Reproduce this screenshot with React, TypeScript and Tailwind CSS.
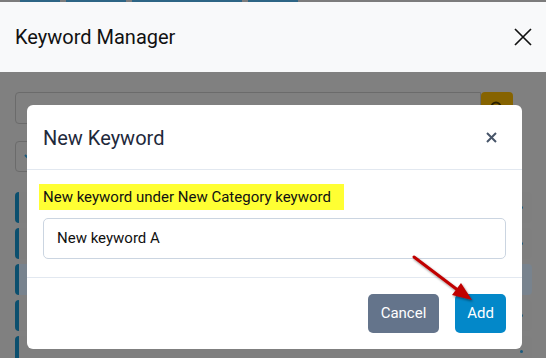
import React from 'react';

const rows = [
  { top: false, dot: true },
  { top: false, dot: true },
  { top: true, dot: false },
  { top: false, dot: true },
  { top: false, dot: true },
];

const App: React.FC = () => {
  return (
    <div className="relative w-[546px] h-[358px] overflow-hidden flex flex-col bg-[#808080] font-['Roboto',sans-serif]">
      {/* page behind, darkened */}
      <div className="h-[2px] shrink-0 flex gap-[6px] pl-[20px] bg-[#7c7c7c]">
        <span className="w-[40px] bg-[#2d6585]" />
        <span className="w-[60px] bg-[#2d6585]" />
        <span className="w-[110px] bg-[#2d6585]" />
        <span className="w-[50px] bg-[#2d6585]" />
      </div>

      {/* Keyword Manager header */}
      <div className="h-[70px] shrink-0 flex items-center justify-between px-[15px] bg-[#f8f9fa]">
        <h1 className="text-[20px] text-[#111] leading-none">Keyword Manager</h1>
        <svg width="18" height="18" viewBox="0 0 18 18" className="mr-[-1px]">
          <path d="M1 1L17 17M17 1L1 17" stroke="#111" strokeWidth="1.7" />
        </svg>
      </div>

      {/* Keyword Manager body, under the backdrop */}
      <div className="relative flex-1 px-[15px] pt-[20px]">
        <div className="flex w-[498px]">
          <div className="flex-1 h-[32px] border border-[#6b6b6b] rounded-l-[4px] bg-[#808080]" />
          <div className="w-[32px] h-[32px] rounded-[4px] bg-[#866300] flex items-center justify-center">
            <svg width="14" height="14" viewBox="0 0 14 14">
              <circle cx="6" cy="6" r="4.5" stroke="#2a2000" strokeWidth="2" fill="none" />
            </svg>
          </div>
        </div>
        <div className="mt-[17px] w-[110px] h-[31px] border border-[#6b6b6b] rounded-[4px] flex items-center pl-[8px]">
          <svg width="10" height="6" viewBox="0 0 10 6">
            <path d="M1 1L5 5L9 1" stroke="#1c5a7c" strokeWidth="2" fill="none" />
          </svg>
        </div>
        <div className="mt-[20px] flex flex-col gap-[5px] w-[517px]">
          {rows.map((r, i) => (
            <div
              key={i}
              className={`h-[31px] rounded-[4px] border-l-[4px] border-[#0b4f6e] flex items-center justify-end pr-[9px] ${r.top ? 'bg-[#78838e]' : 'bg-[#7f7f7f]'}`}
            >
              {r.dot && <span className="w-[3px] h-[3px] rounded-full bg-[#1c5a7c]" />}
            </div>
          ))}
        </div>

        {/* New Keyword modal */}
        <div className="absolute left-[27px] top-[33px] w-[495px] h-[244px] bg-white rounded-[6px] flex flex-col">
          <div className="h-[65px] shrink-0 flex items-center justify-between pl-[16px] pr-[25px] border-b border-[#e2e8f0]">
            <h2 className="text-[20px] text-[#1e293b] leading-none mt-[2px]">New Keyword</h2>
            <svg width="11" height="11" viewBox="0 0 11 11">
              <path d="M1 1L10 10M10 1L1 10" stroke="#475569" strokeWidth="2" />
            </svg>
          </div>
          <div className="h-[108px] shrink-0 px-[16px] pt-[14px] border-b border-[#e2e8f0]">
            <div className="ml-[-4px] w-fit pl-[4px] pr-[13px] h-[26px] flex items-center bg-[#ffff33] text-[15px] text-[#111]">
              New keyword under New Category keyword
            </div>
            <div className="mt-[8px] h-[41px] border border-[#cbd5e1] rounded-[5px] flex items-center pl-[13px] text-[15px] text-[#111]">
              New keyword A
            </div>
          </div>
          <div className="flex-1 flex justify-end items-start gap-[16px] pt-[16px] pr-[16px]">
            <button className="w-[71px] h-[39px] rounded-[5px] bg-[#64748b] text-white text-[15px]">Cancel</button>
            <button className="w-[51px] h-[39px] rounded-[5px] bg-[#0388c9] text-white text-[15px]">Add</button>
          </div>
        </div>
      </div>

      {/* annotation arrow */}
      <svg className="absolute left-0 top-0 pointer-events-none" width="546" height="358" viewBox="0 0 546 358">
        <defs>
          <filter id="sh" x="-20%" y="-20%" width="140%" height="140%">
            <feDropShadow dx="1" dy="1.5" stdDeviation="1.2" floodColor="#000" floodOpacity="0.45" />
          </filter>
        </defs>
        <g filter="url(#sh)">
          <line x1="414" y1="257" x2="459" y2="291" stroke="#c00000" strokeWidth="3" strokeLinecap="round" />
          <polygon points="472,300 452,295 461,283" fill="#c00000" />
        </g>
      </svg>
    </div>
  );
};

export default App;
